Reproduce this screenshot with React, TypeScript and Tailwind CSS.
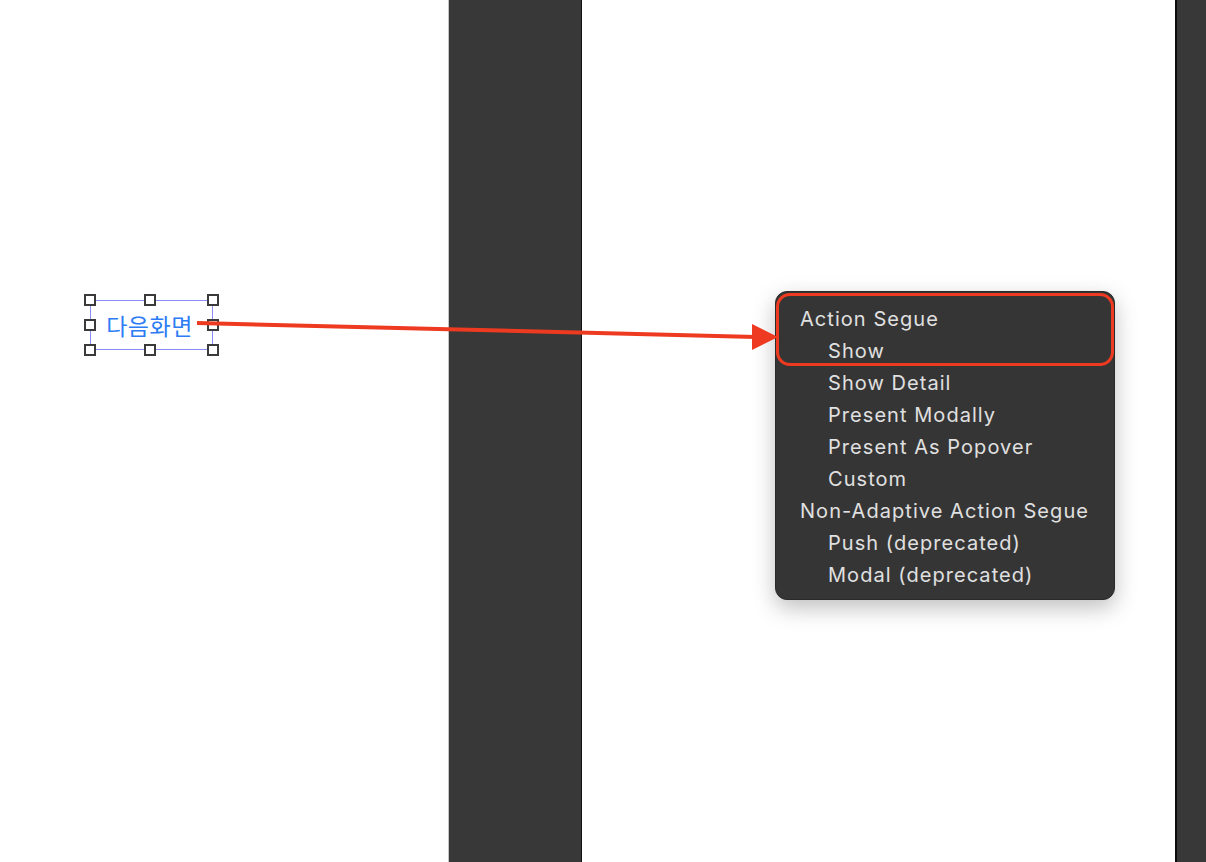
import React from "react";

const segues = [
  { label: "Action Segue", indent: false },
  { label: "Show", indent: true },
  { label: "Show Detail", indent: true },
  { label: "Present Modally", indent: true },
  { label: "Present As Popover", indent: true },
  { label: "Custom", indent: true },
  { label: "Non-Adaptive Action Segue", indent: false },
  { label: "Push (deprecated)", indent: true },
  { label: "Modal (deprecated)", indent: true },
];

const handles = [
  [90, 300], [150, 300], [213, 300],
  [90, 325], [213, 325],
  [90, 350], [150, 350], [213, 350],
];

function Handle({ x, y }: { x: number; y: number }) {
  return (
    <div
      className="absolute w-[12px] h-[12px] border-2 border-[#3a3a3a] bg-white"
      style={{ left: x - 6, top: y - 6 }}
    />
  );
}

export default function App() {
  return (
    <div className="relative w-[1206px] h-[862px] overflow-hidden bg-white font-['Inter',sans-serif]">
      <div className="flex h-full">
        <div className="w-[448px] shrink-0" />
        <div className="w-[134px] shrink-0 bg-[#383838] border-l border-l-[#c4c4c4] border-r border-r-[#111]" />
        <div className="flex-1" />
        <div className="w-[31px] shrink-0 bg-[#383838] border-l-[2px] border-l-[#0c0c0c]" />
      </div>

      {/* selected button */}
      <div className="absolute left-[90px] top-[300px] w-[123px] h-[50px] flex items-center justify-center border-[1.5px] border-[#8a8cf5] text-[23px] tracking-[0.5px] text-[#2d7cf6] font-['Noto_Sans_CJK_KR',sans-serif] pr-[4px]">
        다음화면
      </div>
      {handles.map(([x, y]) => (
        <Handle key={`${x}-${y}`} x={x} y={y} />
      ))}

      {/* segue menu */}
      <div className="absolute left-[775px] top-[291px] w-[340px] h-[309px] rounded-[12px] bg-[#353535] border border-[#2a2a2a] shadow-[0_8px_22px_rgba(0,0,0,0.25)] pt-[11px]">
        {segues.map((s) => (
          <div
            key={s.label}
            className={`h-[32px] flex items-center text-[20px] text-[#e0e0e0] tracking-[1.05px] ${s.indent ? "pl-[52px]" : "pl-[24px]"}`}
          >
            {s.label}
          </div>
        ))}
      </div>
      <div className="absolute left-[776px] top-[293px] w-[338px] h-[73px] rounded-[14px] border-[3px] border-[#ee3a20]" />

      {/* arrow */}
      <svg className="absolute left-0 top-0" width="1206" height="862">
        <line x1="197" y1="323" x2="756" y2="337" stroke="#ee3a20" strokeWidth="4" />
        <polygon points="752,324 778,337 752,350" fill="#ee3a20" />
      </svg>
    </div>
  );
}
